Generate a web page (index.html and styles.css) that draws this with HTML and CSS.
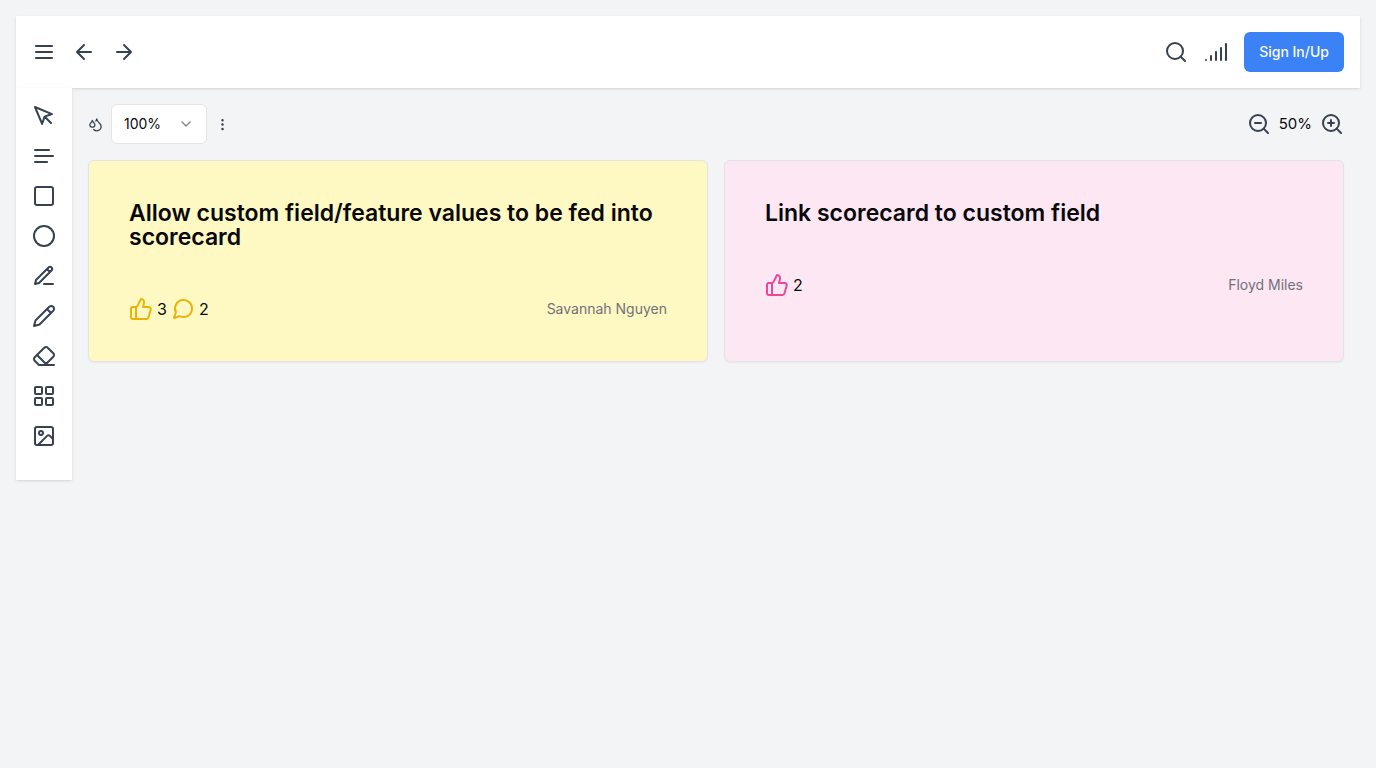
FILE: index.html
```html
<!DOCTYPE html>
<html lang="en">
<head>
<meta charset="utf-8">
<meta name="viewport" content="width=device-width, initial-scale=1">
<title>Whiteboard</title>
<link rel="stylesheet" href="styles.css">
</head>
<body>
<header class="topbar">
  <nav class="group" aria-label="History">
    <button class="icon-btn" aria-label="Menu"><svg class="icon" viewBox="0 0 24 24"><path d="M4 12h16M4 6h16M4 18h16"/></svg></button>
    <button class="icon-btn" aria-label="Back"><svg class="icon" viewBox="0 0 24 24"><path d="m12 19-7-7 7-7M19 12H5"/></svg></button>
    <button class="icon-btn" aria-label="Forward"><svg class="icon" viewBox="0 0 24 24"><path d="M5 12h14M12 5l7 7-7 7"/></svg></button>
  </nav>
  <div class="group">
    <button class="icon-btn" aria-label="Search"><svg class="icon" viewBox="0 0 24 24"><circle cx="11" cy="11" r="8"/><path d="m21 21-4.3-4.3"/></svg></button>
    <button class="icon-btn" aria-label="Signal"><svg class="icon" viewBox="0 0 24 24"><path d="M2 20h.01M7 20v-4M12 20v-8M17 20V8M22 4v16"/></svg></button>
    <button class="primary-btn">Sign In/Up</button>
  </div>
</header>
<div class="workspace">
  <aside class="tools" aria-label="Tools">
    <button class="icon-btn" aria-label="Select"><svg class="icon" viewBox="0 0 24 24"><path d="m3 3 7.07 16.97 2.51-7.39 7.39-2.51L3 3zM13 13l6 6"/></svg></button>
    <button class="icon-btn" aria-label="Text"><svg class="icon" viewBox="0 0 24 24"><path d="M17 6.1H3M21 12.1H3M15.1 18H3"/></svg></button>
    <button class="icon-btn" aria-label="Rectangle"><svg class="icon" viewBox="0 0 24 24"><rect x="3" y="3" width="18" height="18" rx="2"/></svg></button>
    <button class="icon-btn" aria-label="Ellipse"><svg class="icon" viewBox="0 0 24 24"><circle cx="12" cy="12" r="10"/></svg></button>
    <button class="icon-btn" aria-label="Draw line"><svg class="icon" viewBox="0 0 24 24"><path d="M12 20h9M16.5 3.5a2.12 2.12 0 0 1 3 3L7 19l-4 1 1-4ZM15 5l3 3"/></svg></button>
    <button class="icon-btn" aria-label="Pencil"><svg class="icon" viewBox="0 0 24 24"><path d="M17 3a2.85 2.83 0 1 1 4 4L7.5 20.5 2 22l1.5-5.5ZM15 5l4 4"/></svg></button>
    <button class="icon-btn" aria-label="Eraser"><svg class="icon" viewBox="0 0 24 24"><path d="m7 21-4.3-4.3c-1-1-1-2.5 0-3.4l9.6-9.6c1-1 2.5-1 3.4 0l5.6 5.6c1 1 1 2.5 0 3.4L13 21M22 21H7M5 11l9 9"/></svg></button>
    <button class="icon-btn" aria-label="Grid"><svg class="icon" viewBox="0 0 24 24"><rect x="3" y="3" width="7" height="7" rx="1"/><rect x="14" y="3" width="7" height="7" rx="1"/><rect x="14" y="14" width="7" height="7" rx="1"/><rect x="3" y="14" width="7" height="7" rx="1"/></svg></button>
    <button class="icon-btn" aria-label="Image"><svg class="icon" viewBox="0 0 24 24"><rect x="3" y="3" width="18" height="18" rx="2"/><circle cx="9" cy="9" r="2"/><path d="m21 15-3.086-3.086a2 2 0 0 0-2.828 0L6 21"/></svg></button>
  </aside>
  <main class="board">
    <div class="controls">
      <div class="control-set">
        <svg class="icon icon-small" viewBox="0 0 24 24" aria-hidden="true"><path d="M7 16.3c2.2 0 4-1.83 4-4.05 0-1.16-.57-2.26-1.71-3.19S7.29 6.75 7 5.3c-.29 1.45-1.14 2.84-2.29 3.76S3 11.1 3 12.25c0 2.22 1.8 4.05 4 4.05z"/><path d="M12.56 6.6A10.97 10.97 0 0 0 14 3.02c.5 2.5 2 4.9 4 6.5s3 3.5 3 5.5a6.98 6.98 0 0 1-11.91 4.97"/></svg>
        <div class="select-wrap">
          <select class="select" aria-label="Opacity"><option>100%</option><option>75%</option><option>50%</option></select>
          <svg class="icon chevron" viewBox="0 0 24 24" aria-hidden="true"><path d="m6 9 6 6 6-6"/></svg>
        </div>
        <button class="icon-btn" aria-label="More"><svg class="icon icon-small" viewBox="0 0 24 24"><circle cx="12" cy="12" r="1"/><circle cx="12" cy="5" r="1"/><circle cx="12" cy="19" r="1"/></svg></button>
      </div>
      <div class="control-set">
        <button class="icon-btn" aria-label="Zoom out"><svg class="icon" viewBox="0 0 24 24"><circle cx="11" cy="11" r="8"/><path d="m21 21-4.35-4.35M8 11h6"/></svg></button>
        <span class="zoom-level">50%</span>
        <button class="icon-btn" aria-label="Zoom in"><svg class="icon" viewBox="0 0 24 24"><circle cx="11" cy="11" r="8"/><path d="m21 21-4.35-4.35M11 8v6M8 11h6"/></svg></button>
      </div>
    </div>
    <div class="cards">
      <article class="card card-yellow">
        <h3 class="card-title">Allow custom field/feature values to be fed into scorecard</h3>
        <div class="card-meta">
          <div class="stats">
            <svg class="icon" viewBox="0 0 24 24" aria-label="Likes"><path d="M7 10v12M15 5.88 14 10h5.83a2 2 0 0 1 1.92 2.56l-2.33 8A2 2 0 0 1 17.5 22H4a2 2 0 0 1-2-2v-8a2 2 0 0 1 2-2h2.76a2 2 0 0 0 1.79-1.11L12 2a3.13 3.13 0 0 1 3 3.88Z"/></svg>
            <span>3</span>
            <svg class="icon" viewBox="0 0 24 24" aria-label="Comments"><path d="m3 21 1.9-5.7a8.5 8.5 0 1 1 3.8 3.8z"/></svg>
            <span>2</span>
          </div>
          <span class="author">Savannah Nguyen</span>
        </div>
      </article>
      <article class="card card-pink">
        <h3 class="card-title">Link scorecard to custom field</h3>
        <div class="card-meta">
          <div class="stats">
            <svg class="icon" viewBox="0 0 24 24" aria-label="Likes"><path d="M7 10v12M15 5.88 14 10h5.83a2 2 0 0 1 1.92 2.56l-2.33 8A2 2 0 0 1 17.5 22H4a2 2 0 0 1-2-2v-8a2 2 0 0 1 2-2h2.76a2 2 0 0 0 1.79-1.11L12 2a3.13 3.13 0 0 1 3 3.88Z"/></svg>
            <span>2</span>
          </div>
          <span class="author">Floyd Miles</span>
        </div>
      </article>
    </div>
  </main>
</div>
</body>
</html>
```
FILE: styles.css
```css
* { box-sizing: border-box; }

body {
  margin: 0;
  min-height: 100vh;
  padding: 16px;
  background: #f3f4f6;
  color: #09090b;
  font: 16px/24px Inter, sans-serif;
}

button, select { font: inherit; color: inherit; }

.topbar {
  display: flex;
  align-items: center;
  justify-content: space-between;
  padding: 16px;
  background: #fff;
  box-shadow: 0 1px 3px rgba(0, 0, 0, .1), 0 1px 2px -1px rgba(0, 0, 0, .1);
}

.group { display: flex; align-items: center; gap: 16px; }

.icon-btn {
  display: flex;
  padding: 0;
  border: 0;
  background: none;
  color: #374151;
  cursor: pointer;
}

.icon {
  display: block;
  flex: none;
  width: 24px;
  height: 24px;
  fill: none;
  stroke: currentColor;
  stroke-width: 2;
  stroke-linecap: round;
  stroke-linejoin: round;
}

.icon-small { width: 15px; height: 15px; color: #374151; }

.primary-btn {
  height: 40px;
  padding: 0 15px;
  border: 0;
  border-radius: 6px;
  background: #3b82f6;
  color: #f8fafc;
  font-size: 14px;
  font-weight: 500;
}

.workspace { display: flex; align-items: flex-start; }

.tools {
  display: flex;
  flex-direction: column;
  gap: 16px;
  padding: 16px 16px 32px;
  background: #fff;
  box-shadow: 0 1px 3px rgba(0, 0, 0, .1), 0 1px 2px -1px rgba(0, 0, 0, .1);
}

.board { flex: 1; min-width: 0; padding: 16px; }

.controls {
  display: flex;
  align-items: center;
  justify-content: space-between;
  margin-bottom: 16px;
}

.control-set { display: flex; align-items: center; gap: 8px; }
.zoom-level { font-size: 15px; }

.select-wrap { display: grid; align-items: center; width: 96px; }

.select {
  grid-area: 1 / 1;
  appearance: none;
  width: 100%;
  height: 40px;
  padding: 0 12px;
  border: 1px solid #e4e4e7;
  border-radius: 6px;
  background: #fff;
  font-size: 14px;
}

.chevron {
  grid-area: 1 / 1;
  justify-self: end;
  width: 16px;
  height: 16px;
  margin-right: 13px;
  opacity: .5;
  pointer-events: none;
}

.cards { display: grid; grid-template-columns: repeat(2, minmax(0, 1fr)); gap: 16px; }

.card {
  padding: 40px;
  border: 1px solid #e4e4e7;
  border-radius: 6px;
  box-shadow: 0 1px 2px rgba(0, 0, 0, .05);
}

.card-yellow { background: #fef9c3; }
.card-yellow .icon { color: #eab308; }
.card-pink { background: #fce7f3; }
.card-pink .icon { color: #ec4899; }

.card-title {
  margin: 0 0 48px;
  font-size: 23px;
  font-weight: 600;
  line-height: 24px;
}

.card-meta { display: flex; align-items: center; justify-content: space-between; }
.stats { display: flex; align-items: center; gap: 4px; }
.author { color: #71717a; font-size: 14px; }
```
